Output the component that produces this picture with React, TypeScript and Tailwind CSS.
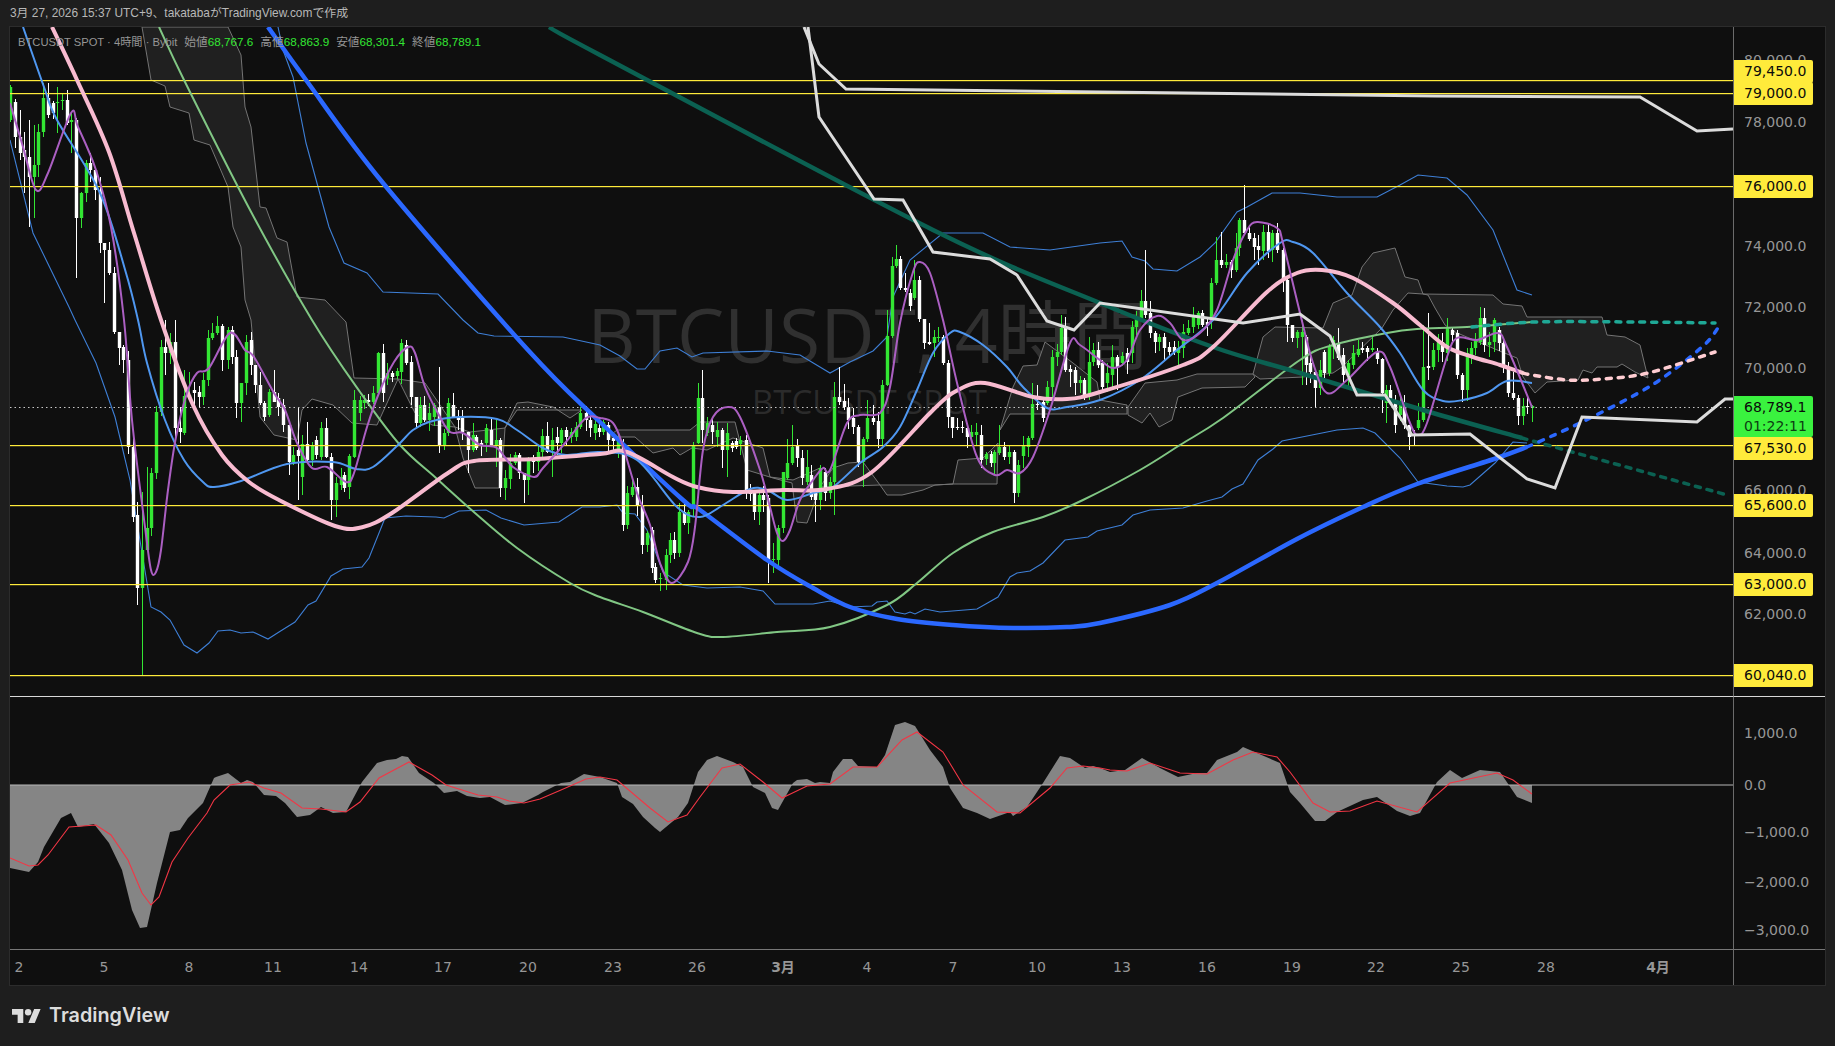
import React from "react";

type Pts = number[][];

const straight = (p: Pts) => p.map((q, i) => `${i ? "L" : "M"}${q[0]} ${q[1]}`).join(" ");
const smooth = (p: Pts) => {
  let d = `M${p[0][0]} ${p[0][1]}`;
  for (let i = 0; i < p.length - 1; i++) {
    const a = p[Math.max(i - 1, 0)];
    const b = p[i];
    const c = p[i + 1];
    const e = p[Math.min(i + 2, p.length - 1)];
    d += ` C${(b[0] + (c[0] - a[0]) / 6).toFixed(1)} ${(b[1] + (c[1] - a[1]) / 6).toFixed(1)} ${(c[0] - (e[0] - b[0]) / 6).toFixed(1)} ${(c[1] - (e[1] - b[1]) / 6).toFixed(1)} ${c[0]} ${c[1]}`;
  }
  return d;
};

const bars: number[][] = [
[10,87,120,1],[15,102,137,0],[20,137,153,0],[24,150,157,0],[29,157,177,0],[34,165,177,1],[38,132,165,1],[43,98,132,1],[48,98,115,0],[53,103,113,0],[57,102,103,1],[62,100,101,1],[67,100,123,0],[71,120,122,1],[76,120,218,0],[81,193,218,1],[86,163,193,1],[90,163,170,0],[95,170,190,0],[100,190,243,0],[104,243,250,0],[109,250,273,0],[114,273,332,0],[119,332,348,0],[123,347,360,0],[128,360,447,0],[133,447,517,0],[137,515,588,0],[142,550,588,1],[147,528,550,1],[151,473,528,1],[156,412,473,1],[161,347,412,1],[165,347,353,0],[170,342,353,1],[175,342,428,0],[180,428,432,0],[184,396,433,1],[189,395,398,1],[194,390,393,0],[199,392,397,0],[203,380,397,1],[208,338,380,1],[212,333,338,1],[217,326,333,1],[222,326,360,0],[228,330,360,1],[232,330,357,0],[236,357,403,0],[241,383,403,1],[246,342,383,1],[251,340,365,0],[255,365,385,0],[260,385,403,0],[264,403,417,0],[269,392,415,1],[274,392,402,0],[278,398,407,0],[283,405,425,0],[289,425,462,0],[293,455,462,1],[298,450,456,0],[302,444,477,1],[307,444,460,0],[312,445,460,1],[316,440,455,0],[321,428,457,1],[326,428,457,0],[331,457,500,0],[336,483,500,1],[341,477,485,1],[344,475,488,0],[349,456,487,1],[354,400,457,1],[360,400,413,1],[364,400,403,1],[368,400,402,0],[373,393,402,1],[378,353,393,1],[383,353,393,0],[387,373,378,1],[392,373,377,0],[397,371,376,1],[401,343,372,1],[406,345,363,0],[411,362,397,0],[416,397,423,0],[420,405,423,1],[424,405,420,0],[429,413,420,1],[434,405,417,1],[439,407,445,0],[444,433,445,1],[448,403,433,1],[453,405,417,0],[458,417,420,0],[462,418,432,0],[468,432,450,0],[473,435,450,1],[476,437,448,0],[481,443,445,0],[486,428,443,1],[491,430,445,0],[496,440,445,1],[500,440,488,0],[505,478,488,1],[510,463,479,1],[515,455,463,1],[519,455,473,0],[524,473,480,0],[528,460,480,1],[533,460,462,0],[538,452,462,1],[542,436,452,1],[547,436,452,0],[552,440,450,1],[557,437,443,0],[561,430,443,1],[566,430,437,0],[571,432,437,1],[576,427,437,1],[580,413,427,1],[586,413,420,0],[590,420,428,0],[595,424,433,1],[599,428,432,0],[603,422,432,1],[608,425,440,0],[613,438,441,0],[618,440,450,1],[623,445,525,0],[627,493,525,1],[632,487,495,1],[637,487,505,0],[642,505,545,0],[647,533,545,1],[652,530,568,0],[655,567,580,0],[660,578,579,1],[666,555,580,1],[670,540,555,1],[674,540,553,0],[679,512,553,1],[684,512,523,0],[688,512,523,1],[693,445,507,1],[698,398,443,1],[702,398,430,0],[707,423,433,1],[712,425,432,0],[717,430,437,1],[722,430,450,0],[727,433,450,1],[732,443,448,0],[736,441,447,0],[740,440,444,1],[746,440,490,0],[750,490,494,0],[754,490,512,0],[759,495,512,1],[763,495,500,0],[768,498,560,0],[773,559,560,1],[778,528,560,1],[783,472,528,1],[787,463,478,1],[792,447,463,1],[797,446,458,0],[802,458,478,0],[807,467,482,1],[811,475,497,0],[815,493,500,0],[820,468,500,1],[825,472,493,0],[830,482,493,1],[834,397,482,1],[839,397,402,0],[844,401,407,0],[848,407,420,0],[853,418,427,0],[858,427,462,0],[863,439,462,1],[867,418,439,1],[873,418,422,0],[878,421,439,0],[882,385,439,1],[887,336,385,1],[892,266,336,1],[896,259,266,1],[900,259,288,0],[905,288,290,0],[910,293,306,0],[914,280,298,1],[919,280,319,0],[924,319,343,0],[929,342,344,0],[934,337,343,1],[938,337,338,1],[943,337,363,0],[948,363,417,0],[952,417,428,0],[957,427,428,0],[962,427,428,0],[967,428,437,0],[971,432,437,1],[976,432,435,1],[981,435,460,0],[986,454,459,1],[991,454,463,0],[994,452,463,1],[999,447,453,1],[1004,447,457,0],[1009,452,457,1],[1014,452,493,0],[1018,465,493,1],[1023,446,456,1],[1028,438,447,1],[1032,404,438,1],[1037,404,405,0],[1043,402,418,0],[1047,387,403,1],[1052,357,387,1],[1057,352,357,1],[1061,328,352,1],[1065,328,370,0],[1070,369,372,0],[1075,370,383,0],[1080,380,383,1],[1084,380,395,0],[1089,362,395,1],[1093,350,362,1],[1098,350,365,0],
[1102,363,387,0],[1107,373,383,1],[1112,357,375,1],[1117,357,367,0],[1122,356,363,1],[1127,353,362,0],[1132,327,353,1],[1136,318,327,1],[1141,301,320,1],[1145,301,315,0],[1150,313,333,0],[1155,333,342,0],[1159,337,342,1],[1164,337,348,0],[1169,347,352,0],[1174,347,352,0],[1178,348,353,1],[1183,332,348,1],[1188,328,333,1],[1193,317,327,1],[1198,313,325,1],[1202,313,325,0],[1207,322,325,0],[1211,283,320,1],[1216,260,283,1],[1221,260,265,0],[1226,262,265,1],[1231,262,270,0],[1236,248,270,1],[1239,220,248,1],[1244,220,233,0],[1249,233,239,0],[1254,238,247,0],[1258,246,250,0],[1263,232,251,1],[1268,232,251,0],[1272,233,250,1],[1277,233,250,0],[1283,250,280,0],[1287,280,325,0],[1292,325,338,0],[1297,332,338,1],[1302,332,337,1],[1306,337,365,0],[1310,363,372,0],[1315,372,388,0],[1320,370,388,1],[1324,352,373,0],[1329,347,373,1],[1333,340,347,1],[1338,343,358,0],[1343,355,375,0],[1348,363,375,1],[1353,353,365,1],[1358,349,355,1],[1362,348,350,0],[1367,348,352,0],[1372,348,350,1],[1377,352,359,0],[1382,359,393,0],[1386,390,403,1],[1390,390,403,0],[1395,403,425,0],[1400,403,415,1],[1404,405,425,0],[1409,425,437,0],[1414,434,436,0],[1418,420,428,1],[1423,367,420,1],[1428,366,368,0],[1433,350,367,1],[1438,342,350,1],[1442,342,352,0],[1447,328,353,1],[1452,330,335,0],[1457,333,375,0],[1462,375,390,0],[1467,353,390,1],[1471,348,355,1],[1475,340,348,1],[1480,318,342,1],[1484,318,345,0],[1489,342,345,1],[1494,320,342,1],[1499,330,343,0],[1503,343,367,0],[1508,367,393,0],[1513,393,398,0],[1518,398,416,0],[1523,406,416,1],[1527,406,407,0],[1532,406,408,1],
];

const wicks: Record<number, number[]> = {29:[120,227],34:[125,218],24:[132,193],20:[110,160],43:[83,137],48:[83,118],57:[87,133],62:[93,110],67:[90,125],71:[113,153],76:[118,278],81:[192,228],86:[160,202],100:[177,253],104:[243,303],109:[242,275],119:[332,365],123:[345,373],142:[492,675],137:[502,605],147:[467,538],165:[320,375],175:[320,443],180:[407,443],184:[370,435],189:[372,400],194:[382,405],212:[323,340],236:[350,418],241:[383,422],255:[365,393],260:[372,405],274:[370,402],289:[425,475],298:[407,500],302:[435,495],307:[422,462],321:[422,460],326:[418,458],331:[453,520],336:[477,517],344:[472,492],354:[390,458],378:[352,395],406:[340,365],416:[397,428],439:[367,453],453:[393,418],468:[432,473],473:[423,452],491:[417,447],496:[420,467],500:[438,497],515:[452,465],524:[473,503],528:[457,495],547:[422,453],552:[428,477],702:[370,443],698:[383,444],727:[423,477],722:[428,468],754:[490,520],759:[490,525],768:[495,583],773:[543,573],783:[472,533],787:[439,480],792:[425,465],807:[450,485],815:[490,522],834:[382,515],839:[367,405],844:[384,410],863:[437,487],867:[400,442],873:[405,425],878:[412,448],882:[380,445],887:[310,386],896:[245,268],900:[256,290],905:[273,292],914:[260,300],919:[276,322],924:[319,349],929:[323,345],934:[330,357],952:[417,438],957:[418,430],967:[425,448],971:[425,440],994:[450,475],999:[425,455],1004:[442,460],1014:[450,503],1018:[460,497],1032:[383,440],1037:[385,410],1061:[315,355],1065:[317,372],1070:[365,387],1084:[378,400],1089:[337,400],1098:[342,368],1102:[360,393],1112:[345,390],1117:[355,390],1141:[290,322],1145:[250,318],1150:[301,338],1164:[333,360],1188:[320,335],1216:[237,285],1221:[232,268],1231:[260,278],1236:[233,272],1244:[185,235],1249:[225,241],1254:[233,260],1258:[235,265],1272:[230,262],1287:[278,342],1292:[325,342],1297:[330,348],1302:[320,385],1306:[335,385],1315:[370,407],1338:[328,360],1343:[348,385],1348:[360,387],1362:[342,353],1372:[337,352],1382:[358,413],1386:[385,423],1390:[385,405],1409:[425,450],1414:[430,445],1418:[403,430],1423:[325,422],1428:[313,380],1462:[373,402],1480:[307,345],1484:[308,352],1513:[372,400],1518:[395,425],1532:[405,422]};

const clouds: Pts[] = [
[[142,27],[151,80],[165,86],[170,107],[189,113],[194,140],[210,145],[228,187],[233,227],[241,247],[245,300],[251,320],[260,417],[274,435],[297,440],[302,410],[312,399],[333,405],[352,423],[377,425],[398,379],[354,378],[346,322],[325,300],[297,297],[287,242],[277,238],[266,208],[260,207],[251,127],[245,107],[241,55],[228,27]],
[[398,379],[425,383],[455,427],[463,458],[475,488],[501,488],[505,428],[488,430],[470,432],[455,427],[432,425],[415,413]],
[[505,428],[517,403],[528,402],[553,407],[570,418],[582,410],[574,410],[553,410],[517,410]],
[[608,437],[617,430],[690,430],[700,422],[735,422],[747,470],[773,478],[792,483],[797,522],[807,523],[813,507],[820,487],[820,468],[793,480],[770,477],[763,448],[733,438],[707,450],[692,448],[680,455],[673,448],[653,453],[635,437]],
[[820,487],[833,468],[848,463],[863,462],[880,485]],
[[880,485],[887,495],[902,495],[923,490],[935,485]],
[[935,485],[953,484]],
[[953,484],[958,460],[983,458],[998,443],[997,484]],
[[1000,430],[1013,387],[1023,366],[1037,365],[1045,342],[1073,363],[1097,382],[1100,400],[1127,405],[1127,414],[1010,414]],
[[1128,407],[1145,383],[1177,380],[1197,374],[1253,374],[1255,377],[1245,387],[1202,388],[1178,397],[1172,420],[1159,427],[1150,413],[1142,423],[1128,415]],
[[1253,374],[1263,337],[1275,327],[1323,328],[1333,303],[1352,295],[1362,267],[1373,253],[1395,248],[1405,277],[1418,280],[1423,294],[1408,293],[1393,310],[1382,328],[1342,367],[1333,373],[1303,377],[1260,379]],
[[1423,294],[1493,295],[1503,304],[1522,306],[1527,317],[1602,317],[1607,335],[1625,337],[1640,345],[1648,378],[1635,372],[1622,364],[1617,367],[1597,367],[1592,373],[1583,370],[1578,380],[1547,382],[1535,393],[1523,377],[1517,358],[1502,352],[1455,332],[1445,325],[1435,308],[1428,295]],
];

const bbUpper: Pts = [[278,27],[283,50],[293,77],[306,143],[329,227],[344,263],[367,273],[383,292],[438,294],[463,320],[478,333],[494,336],[563,337],[600,345],[620,356],[637,369],[645,369],[660,351],[677,348],[692,357],[703,353],[767,351],[800,355],[830,373],[850,362],[873,351],[887,337],[893,297],[910,260],[943,233],[983,233],[1010,247],[1050,250],[1100,243],[1122,241],[1132,257],[1145,261],[1153,269],[1177,271],[1200,257],[1215,243],[1237,212],[1247,207],[1272,193],[1300,193],[1337,197],[1377,197],[1400,185],[1418,175],[1447,178],[1467,195],[1493,230],[1517,290],[1532,295]];
const bbLower: Pts = [[10,140],[33,233],[69,307],[75,320],[96,363],[115,417],[130,480],[151,607],[161,612],[170,620],[184,645],[197,653],[209,643],[218,631],[230,630],[241,633],[253,632],[268,639],[279,632],[295,622],[308,605],[316,601],[331,576],[343,569],[362,567],[369,558],[385,518],[406,516],[436,517],[444,518],[459,511],[486,510],[501,518],[524,525],[559,522],[582,507],[600,507],[617,505],[623,513],[635,514],[647,530],[663,572],[683,585],[707,588],[740,587],[763,591],[775,604],[813,604],[830,601],[850,607],[872,606],[877,602],[887,601],[895,612],[905,614],[910,612],[915,614],[925,609],[940,612],[977,609],[998,597],[1010,577],[1017,573],[1030,571],[1043,563],[1065,540],[1088,537],[1097,531],[1122,525],[1133,515],[1150,510],[1183,508],[1207,501],[1222,497],[1232,489],[1243,484],[1258,460],[1273,449],[1282,441],[1317,434],[1337,430],[1363,428],[1375,433],[1400,458],[1418,482],[1447,486],[1463,487],[1470,485],[1495,463],[1513,442],[1527,443]];
const bbMid: Pts = [[23,27],[44,87],[57,120],[100,193],[126,273],[138,320],[147,363],[165,420],[184,460],[203,482],[214,487],[241,481],[287,464],[333,462],[356,469],[373,467],[398,445],[413,430],[429,422],[459,417],[497,419],[517,430],[543,448],[566,455],[600,452],[637,460],[677,507],[700,517],[723,505],[750,489],[767,490],[787,500],[813,493],[833,487],[860,463],[883,447],[900,427],[917,390],[933,353],[950,333],[960,332],[983,345],[1007,367],[1023,387],[1047,408],[1067,407],[1100,400],[1140,380],[1177,350],[1213,320],[1247,273],[1280,243],[1293,242],[1313,253],[1347,293],[1380,327],[1400,353],[1423,390],[1443,401],[1463,400],[1487,393],[1507,381],[1532,383]];
const purple: Pts = [[10,103],[23,147],[36,190],[48,173],[71,113],[78,127],[96,170],[111,227],[124,320],[132,420],[145,527],[151,570],[156,572],[161,550],[168,490],[176,437],[187,393],[197,373],[209,368],[230,333],[245,350],[254,357],[274,393],[285,410],[297,443],[312,468],[327,467],[346,482],[354,473],[367,427],[379,393],[394,362],[408,347],[415,353],[425,387],[440,417],[450,432],[463,433],[480,445],[497,448],[513,467],[534,477],[543,468],[566,442],[586,418],[600,418],[613,423],[622,443],[637,493],[650,525],[660,563],[672,583],[688,562],[695,527],[703,450],[713,417],[728,407],[740,417],[760,470],[770,507],[777,533],[783,541],[790,530],[800,500],[813,480],[823,468],[830,470],[847,423],[860,415],[880,413],[890,387],[900,323],[913,272],[920,262],[930,273],[943,320],[958,387],[977,457],[995,475],[1007,470],[1020,473],[1033,457],[1050,410],[1070,343],[1080,345],[1100,360],[1113,368],[1127,360],[1140,330],[1157,316],[1170,323],[1183,340],[1200,333],[1217,310],[1233,260],[1247,230],[1257,222],[1277,228],[1283,243],[1300,313],[1313,363],[1327,393],[1347,380],[1377,352],[1390,367],[1410,423],[1418,435],[1427,423],[1447,357],[1457,338],[1477,340],[1498,333],[1507,347],[1532,407]];
const pink: Pts = [[52,27],[77,80],[109,152],[134,233],[161,320],[193,405],[222,455],[249,482],[279,500],[335,526],[363,527],[392,513],[448,473],[474,461],[536,459],[600,454],[627,452],[673,477],[697,487],[733,492],[783,490],[827,489],[872,472],[933,410],[958,390],[985,383],[1033,397],[1067,399],[1100,392],[1183,365],[1213,347],[1267,292],[1297,273],[1322,270],[1353,278],[1393,303],[1420,325],[1447,347],[1473,357],[1500,365],[1523,373]];
const pinkDash: Pts = [[1523,373],[1532,375],[1568,380],[1602,379],[1648,373],[1715,352]];
const green: Pts = [[159,27],[184,80],[249,208],[312,320],[360,392],[400,445],[436,478],[475,513],[517,548],[570,583],[600,597],[643,612],[697,633],[723,637],[777,632],[830,627],[887,605],[917,583],[953,553],[993,532],[1043,517],[1083,500],[1140,470],[1180,445],[1223,418],[1300,360],[1333,345],[1387,333],[1417,329],[1467,327],[1532,322]];
const tealDash: Pts = [[1472,327],[1535,322],[1635,322],[1715,323]];
const blue: Pts = [[268,27],[306,80],[383,183],[528,350],[600,422],[683,500],[700,510],[767,560],[813,588],[850,607],[897,619],[953,625],[1013,628],[1067,627],[1100,623],[1170,605],[1217,583],[1297,539],[1363,507],[1417,484],[1497,458],[1527,447]];
const blueDash: Pts = [[1527,447],[1582,422],[1652,385],[1702,347],[1718,328]];
const teal: Pts = [[549,27],[600,55],[933,230],[1100,303],[1213,347],[1300,373],[1433,413],[1522,438]];
const tealD2: Pts = [[1522,438],[1727,495]];
const white1: Pts = [[804,27],[819,64],[846,89],[1100,92],[1435,96],[1640,97],[1697,131],[1733,129]];
const white2: Pts = [[808,27],[819,117],[874,199],[903,200],[933,252],[990,259],[1017,275],[1047,321],[1074,330],[1100,303],[1243,323],[1300,314],[1330,336],[1357,395],[1385,395],[1412,435],[1470,434],[1527,479],[1555,488],[1582,417],[1697,422],[1725,399],[1733,399]];

const macd: Pts = [[10,868],[29,872],[38,862],[44,847],[61,818],[71,813],[78,827],[94,824],[109,843],[122,870],[132,910],[140,928],[147,927],[157,883],[170,832],[180,830],[188,818],[203,803],[214,778],[216,777],[228,773],[241,783],[247,780],[253,782],[264,795],[276,796],[285,803],[297,817],[310,815],[321,807],[333,813],[346,812],[362,782],[377,763],[387,760],[396,759],[402,756],[408,757],[419,773],[434,783],[444,793],[457,791],[467,796],[480,798],[490,797],[505,805],[522,803],[538,795],[543,792],[561,783],[570,782],[584,774],[600,777],[617,783],[622,797],[633,804],[643,817],[655,828],[660,832],[678,817],[688,803],[698,772],[707,760],[717,756],[733,762],[743,767],[753,787],[765,793],[772,808],[778,810],[793,783],[797,780],[807,779],[815,783],[820,782],[830,783],[833,772],[843,759],[852,759],[858,766],[877,767],[885,755],[895,725],[905,722],[915,726],[930,750],[943,767],[950,788],[963,808],[977,813],[990,819],[1010,812],[1013,816],[1027,807],[1043,783],[1060,756],[1070,758],[1085,768],[1093,766],[1100,768],[1110,772],[1125,770],[1142,758],[1160,768],[1178,777],[1197,773],[1207,773],[1217,760],[1237,752],[1243,747],[1257,753],[1280,763],[1290,792],[1300,803],[1315,821],[1325,821],[1337,812],[1363,800],[1377,797],[1397,811],[1410,816],[1420,813],[1437,782],[1450,770],[1462,778],[1480,770],[1500,772],[1517,797],[1532,803],[1532,785],[10,785]];
const signal: Pts = [[10,858],[29,866],[38,865],[48,855],[69,827],[96,825],[111,835],[128,860],[142,893],[151,905],[159,897],[172,862],[188,838],[207,813],[214,800],[230,785],[249,782],[264,788],[281,793],[302,808],[321,809],[346,812],[360,802],[379,778],[409,762],[432,775],[446,785],[478,795],[497,797],[509,801],[524,803],[540,799],[561,790],[586,779],[600,777],[617,780],[650,808],[668,822],[687,815],[700,797],[722,768],[740,764],[763,782],[782,798],[807,786],[830,784],[853,767],[877,767],[902,740],[917,732],[943,752],[963,785],[997,812],[1020,813],[1050,788],[1067,768],[1083,766],[1100,768],[1110,770],[1127,771],[1150,763],[1180,773],[1207,774],[1233,760],[1253,752],[1277,757],[1290,772],[1313,803],[1330,812],[1350,811],[1377,801],[1417,812],[1450,783],[1497,773],[1513,780],[1532,794]];

const yellowLines = [80, 93, 186, 445, 505, 584, 675];

const axisMain: [string, number][] = [["80,000.0", 33], ["78,000.0", 95], ["74,000.0", 219], ["72,000.0", 280], ["70,000.0", 341], ["66,000.0", 463], ["64,000.0", 526], ["62,000.0", 587]];
const axisMacd: [string, number][] = [["1,000.0", 36], ["0.0", 88], ["−1,000.0", 135], ["−2,000.0", 185], ["−3,000.0", 233]];
const tags: [string, number][] = [["79,450.0", 33], ["79,000.0", 55], ["76,000.0", 148], ["67,530.0", 410], ["65,600.0", 467], ["63,000.0", 546], ["60,040.0", 637]];
const times: [string, number, boolean][] = [["2", 9, false], ["5", 94, false], ["8", 179, false], ["11", 263, false], ["14", 349, false], ["17", 433, false], ["20", 518, false], ["23", 603, false], ["26", 687, false], ["3月", 773, true], ["4", 857, false], ["7", 943, false], ["10", 1027, false], ["13", 1112, false], ["16", 1197, false], ["19", 1282, false], ["22", 1366, false], ["25", 1451, false], ["28", 1536, false], ["4月", 1648, true]];

function Candles() {
  return (
    <g>
      {bars.map((b, i) => {
        const [x, t, bt, g] = b;
        const w = wicks[x];
        const h1 = (i * 37) % 9;
        const h2 = (i * 53) % 11;
        const hi = w ? w[0] : t - 2 - h1;
        const lo = w ? w[1] : bt + 2 + h2;
        const c = g ? "#33e633" : "#ffffff";
        return (
          <g key={i} fill={c}>
            <rect x={x} y={hi} width={1} height={lo - hi} />
            <rect x={x - 1.2} y={t} width={3.4} height={Math.max(bt - t, 1)} />
          </g>
        );
      })}
    </g>
  );
}

function MainChart() {
  return (
    <svg viewBox="10 27 1723 669" className="relative block w-[1723px] h-[669px]">
      {clouds.map((c, i) => (
        <path key={i} d={straight(c) + " Z"} fill="#202020" stroke="#747474" strokeWidth="1" />
      ))}
      <path d={straight(bbUpper)} fill="none" stroke="#3e7fd6" strokeWidth="1.1" />
      <path d={straight(bbLower)} fill="none" stroke="#3e7fd6" strokeWidth="1.1" />
      <Candles />
      {yellowLines.map((y) => (
        <rect key={y} x="10" y={y} width="1723" height="1.2" fill="#ffeb3b" />
      ))}
      <line x1="10" x2="1733" y1="407.5" y2="407.5" stroke="#c8c8c8" strokeWidth="1" strokeDasharray="1.5 3" />
      <path d={smooth(green)} fill="none" stroke="#81c784" strokeWidth="2" />
      <path d={smooth(tealDash)} fill="none" stroke="#1fa896" strokeWidth="3.5" strokeDasharray="5 7" strokeLinecap="round" />
      <path d={smooth(teal)} fill="none" stroke="#0b6152" strokeWidth="4.5" />
      <path d={straight(tealD2)} fill="none" stroke="#0b6152" strokeWidth="3.5" strokeDasharray="5 7" strokeLinecap="round" />
      <path d={smooth(blue)} fill="none" stroke="#2b68ff" strokeWidth="4.5" />
      <path d={smooth(blueDash)} fill="none" stroke="#2b68ff" strokeWidth="3.5" strokeDasharray="5 8" strokeLinecap="round" />
      <path d={smooth(bbMid)} fill="none" stroke="#4f97f0" strokeWidth="2" />
      <path d={smooth(pink)} fill="none" stroke="#f8bbd0" strokeWidth="4" />
      <path d={smooth(pinkDash)} fill="none" stroke="#ffcdd2" strokeWidth="3.5" strokeDasharray="5 7" strokeLinecap="round" />
      <path d={smooth(purple)} fill="none" stroke="#ab5fc2" strokeWidth="2" />
      <path d={straight(white1)} fill="none" stroke="#dcdcdc" strokeWidth="3" />
      <path d={straight(white2)} fill="none" stroke="#dcdcdc" strokeWidth="3" />
    </svg>
  );
}

function MacdChart() {
  return (
    <svg viewBox="10 697 1723 253" className="block w-[1723px] h-[253px]">
      <path d={straight(macd) + " Z"} fill="#858585" />
      <rect x="10" y="784.5" width="1723" height="1" fill="#b8b8b8" />
      <path d={straight(signal)} fill="none" stroke="#f23645" strokeWidth="1.1" />
    </svg>
  );
}

function Logo() {
  return (
    <svg viewBox="0 4 36 18" className="w-[29px] h-[14.5px] fill-[#dcdcdc]">
      <path d="M14 22H7V11H0V4h14v18zM28 22h-8l7.5-18h8L28 22z" />
      <circle cx="20" cy="8" r="4" />
    </svg>
  );
}

export default function App() {
  return (
    <div className="w-[1835px] h-[1046px] overflow-hidden bg-[#1e1e1e] font-['DejaVu_Sans','Noto_Sans_CJK_JP',sans-serif]">
      <header className="h-[26px] pl-[10px] pt-[2px] flex items-center font-['Liberation_Sans','Noto_Sans_CJK_JP',sans-serif] text-[11.9px] text-[#b8b8b8] whitespace-nowrap">
        3月 27, 2026 15:37 UTC+9、takatabaがTradingView.comで作成
      </header>
      <div className="ml-[9px] w-[1817px] h-[960px] border border-[#2c2c2c] bg-[#0f0f0f] grid grid-cols-[1723px_92px] grid-rows-[670px_253px_35px]">
        <div className="relative border-b border-[#d8d8d8] overflow-hidden">
          <div className="absolute left-0 right-0 top-[270px] flex justify-center pr-[8px] text-[75px] leading-none text-[#303030] font-['Open_Sans','Noto_Sans_CJK_JP',sans-serif] whitespace-nowrap">
            BTCUSDT, 4時間
          </div>
          <div className="absolute left-0 right-0 top-[358px] flex justify-center pr-[4px] text-[33px] leading-none text-[#2b2b2b] font-['Open_Sans',sans-serif] whitespace-nowrap">
            BTCUSDT SPOT
          </div>
          <MainChart />
          <div className="absolute left-[8px] top-[8px] flex gap-[7px] font-['Liberation_Sans','Noto_Sans_CJK_JP',sans-serif] text-[11.7px] leading-[14px] text-[#969696] whitespace-nowrap">
            <span className="text-[11.2px]">BTCUSDT SPOT · 4時間 · Bybit</span>
            <span>始値<span className="text-[#33e633]">68,767.6</span></span>
            <span>高値<span className="text-[#33e633]">68,863.9</span></span>
            <span>安値<span className="text-[#33e633]">68,301.4</span></span>
            <span>終値<span className="text-[#33e633]">68,789.1</span></span>
          </div>
        </div>
        <div className="relative border-l border-b border-l-[#6b6b6b] border-b-[#d8d8d8] text-[14px] leading-[23px] text-[#979797] overflow-hidden">
          {axisMain.map(([t, y]) => (
            <span key={t} className="absolute left-[10px] -translate-y-1/2" style={{ top: y }}>{t}</span>
          ))}
          {tags.map(([t, y]) => (
            <span key={t} className="absolute left-0 w-[79px] h-[23px] pl-[10px] bg-[#ffeb3b] text-[#0b0b0b] rounded-r-[2px]" style={{ top: y }}>{t}</span>
          ))}
          <div className="absolute left-0 top-[369px] w-[79px] h-[41px] pl-[10px] bg-[#3af23f] rounded-r-[2px] flex flex-col justify-center text-[#0a0a0a] leading-[19px]">
            <span>68,789.1</span>
            <span className="text-[#0d3d12]">01:22:11</span>
          </div>
        </div>
        <div className="relative border-b border-[#777777]">
          <MacdChart />
        </div>
        <div className="relative border-l border-b border-l-[#6b6b6b] border-b-[#777777] text-[14px] text-[#979797]">
          {axisMacd.map(([t, y]) => (
            <span key={t} className="absolute left-[10px] -translate-y-1/2" style={{ top: y }}>{t}</span>
          ))}
        </div>
        <div className="relative text-[14px] text-[#979797]">
          {times.map(([t, x, b]) => (
            <span key={t} className={b ? "absolute top-[7px] -translate-x-1/2 font-bold" : "absolute top-[7px] -translate-x-1/2"} style={{ left: x }}>{t}</span>
          ))}
        </div>
        <div className="border-l border-[#6b6b6b]" />
      </div>
      <footer className="h-[60px] pl-[12px] flex items-center gap-[8px]">
        <Logo />
        <span className="font-['Inter',sans-serif] font-semibold text-[19.8px] leading-none text-[#dcdcdc]">TradingView</span>
      </footer>
    </div>
  );
}
